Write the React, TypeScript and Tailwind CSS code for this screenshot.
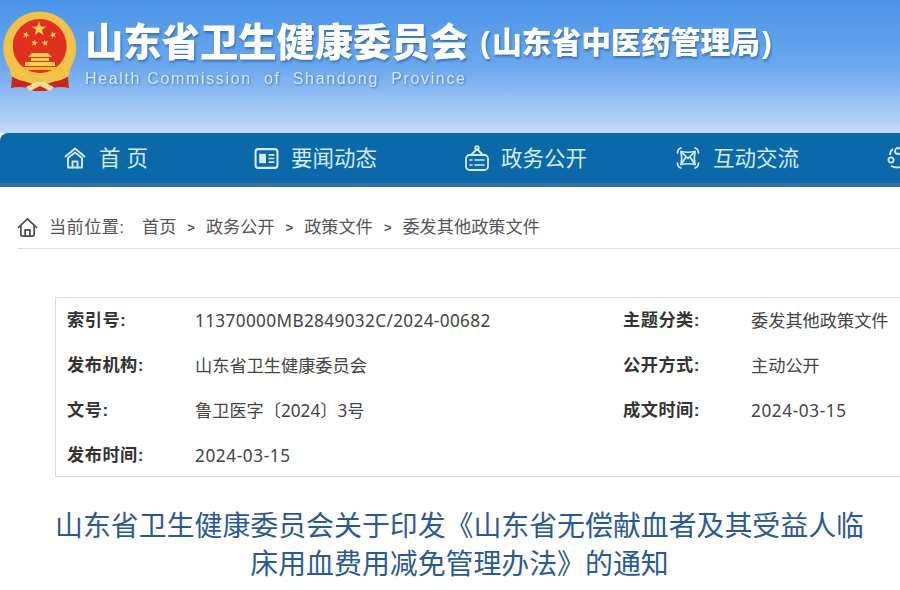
const cjk = "font-['Liberation_Sans','Noto_Sans_CJK_SC',sans-serif]";
const noto = "font-['Noto_Sans','Noto_Sans_CJK_SC',sans-serif]";

function Star({ x, y, r, a = 0 }: { x: number; y: number; r: number; a?: number }) {
  const pts = Array.from({ length: 10 }, (_, i) => {
    const rr = i % 2 ? r * 0.4 : r;
    const t = ((i * 36 + a - 90) * Math.PI) / 180;
    return `${(x + rr * Math.cos(t)).toFixed(2)},${(y + rr * Math.sin(t)).toFixed(2)}`;
  }).join(" ");
  return <polygon points={pts} fill="#f8d04e" />;
}

function Emblem() {
  return (
    <svg viewBox="0 0 80 86" className="w-[80px] h-[86px] shrink-0">
      <path d="M13 60 L11 80 Q24 77 34 83 L46 83 Q56 77 69 80 L67 60 Z" fill="#c9261f" />
      <circle cx="39.7" cy="40" r="36.5" fill="#f0c24a" />
      <circle cx="39.7" cy="38" r="27" fill="#e0301f" />
      <Star x={39} y={21} r={7.5} />
      <Star x={26} y={27} r={3.6} a={20} />
      <Star x={53} y={27} r={3.6} a={-20} />
      <Star x={34.5} y={35} r={3.6} a={10} />
      <Star x={45} y={35} r={3.6} a={-10} />
      <path d="M32 45 H48 L52 49 H28 Z M31 50 H49 V53 H31 Z M25 54 H55 V58 H25 Z" fill="#f8d04e" />
      <path d="M24 59 H56 V62 H24 Z" fill="#f3b92f" />
      <path d="M9 58 Q22 70 34 64 L40 68 L46 64 Q58 70 71 58 L69 68 Q56 76 48 72 L44 78 H36 L32 72 Q24 76 11 68 Z" fill="#f0c24a" />
      <path d="M26 79 L36 74 H44 L54 79 L50 83 L40 78 L30 83 Z" fill="#f6dd9a" />
    </svg>
  );
}

function HomeNavIcon() {
  return (
    <svg viewBox="0 0 22 22" className="w-[22px] h-[22px]" fill="none" stroke="#cfeaf5" strokeWidth="1.9" strokeLinejoin="round" strokeLinecap="round">
      <path d="M1.5 9.5 L11 1.5 L20.5 9.5" />
      <path d="M4 11 L11 5.5 L18 11 V20.5 H4 Z" />
      <path d="M8.5 20.5 V14.5 H13.5 V20.5" />
    </svg>
  );
}

function CrumbHomeIcon() {
  return (
    <svg viewBox="0 0 22 22" className="w-[21px] h-[21px] mr-[11px] shrink-0" fill="none" stroke="#4a4a4a" strokeWidth="1.8" strokeLinejoin="round" strokeLinecap="round">
      <path d="M1.5 11 L11 2 L20.5 11" />
      <path d="M4 9 V18 Q4 20 6 20 H16 Q18 20 18 18 V9" />
      <path d="M8.5 20 V13.5 H13.5 V20" />
    </svg>
  );
}

function NewsIcon() {
  return (
    <svg viewBox="0 0 24 22" className="w-[25px] h-[23px] -ml-[1px]" fill="none" stroke="#d3ecf5" strokeWidth="2">
      <rect x="1.5" y="2" width="21" height="18" rx="2.5" />
      <rect x="5" y="6.5" width="6.5" height="9" fill="#d3ecf5" stroke="none" />
      <path d="M14 7.5h5.5M14 11h5.5M14 14.5h5.5" strokeWidth="1.6" />
    </svg>
  );
}

function PublicIcon() {
  return (
    <svg viewBox="0 0 26 28" className="w-[26px] h-[28px]" fill="none" stroke="#d3ecf5" strokeWidth="1.8" strokeLinecap="round" strokeLinejoin="round">
      <rect x="2" y="11" width="22" height="15" rx="3.5" />
      <path d="M7 11 L13 5 L19 11" />
      <circle cx="13" cy="4" r="1.8" />
      <path d="M6 16h2M11 16h9M6 21h2M11 21h9" strokeWidth="1.6" />
    </svg>
  );
}

function InteractIcon() {
  return (
    <svg viewBox="0 0 24 24" className="w-[24px] h-[24px]" fill="none" stroke="#d3ecf5" strokeWidth="1.7" strokeLinecap="round" strokeLinejoin="round">
      <path d="M5 5.5 Q12 7 19 5.5 Q17.5 12 19 18.5 Q12 17 5 18.5 Q6.5 12 5 5.5 Z" />
      <path d="M5 5.5 L12 12.5 L19 5.5 M5 18.5 L10 11 M19 18.5 L14 11" />
      <path d="M1.5 7 Q1.5 3 5 2 M22.5 7 Q22.5 3 19 2 M1.5 17 Q1.5 21 5 22 M22.5 17 Q22.5 21 19 22" />
    </svg>
  );
}

function ServiceIcon() {
  return (
    <svg viewBox="0 0 24 24" className="w-[24px] h-[24px] shrink-0" fill="none" stroke="#d3ecf5" strokeWidth="1.8">
      <path d="M3 9 Q3 5 6 3" />
      <circle cx="11" cy="5" r="3" />
      <circle cx="4" cy="14" r="2.6" />
      <path d="M4 20 Q10 23 16 20" />
    </svg>
  );
}

function NavItem({ icon, label, className }: { icon: React.ReactNode; label: string; className: string }) {
  return (
    <div className={`flex items-center shrink-0 ${className}`}>
      {icon}
      <span className="text-[21.5px] leading-none pt-[3px] text-[#d3ecf5]">{label}</span>
    </div>
  );
}

function InfoRow({ label, value, label2, value2, valueClass = "", value2Class = "" }: {
  label: string;
  value: string;
  label2?: string;
  value2?: string;
  valueClass?: string;
  value2Class?: string;
}) {
  return (
    <div className="flex items-center h-[45px] text-[17.2px] pt-[1px]">
      <span className="w-[128px] shrink-0 font-bold tracking-[0.5px] text-[#333]">{label}</span>
      <span className={`w-[428px] shrink-0 text-[#444] whitespace-nowrap ${noto} ${valueClass}`}>{value}</span>
      {label2 && <span className="w-[128px] shrink-0 font-bold tracking-[0.5px] text-[#333]">{label2}</span>}
      {value2 && <span className={`shrink-0 text-[#444] whitespace-nowrap ${noto} ${value2Class}`}>{value2}</span>}
    </div>
  );
}

function Sep() {
  return <span className="w-[29.5px] text-center text-[13px] font-bold">&gt;</span>;
}

export default function App() {
  return (
    <div className={`w-[900px] h-[590px] overflow-hidden bg-white ${cjk}`}>
      {/* header */}
      <header className="h-[133px] bg-gradient-to-b from-[#4a94e8] via-[#6ba7ed] to-[#c2daf9] pt-[8px] flex items-start">
        <Emblem />
        <div className="ml-[5px] pt-[13px] min-w-0">
          <div className="flex items-center font-black text-white whitespace-nowrap drop-shadow-[1px_2px_1px_rgba(30,80,140,0.6)]">
            <span className="text-[38.3px] leading-[44px]">山东省卫生健康委员会</span>
            <span className="text-[29.8px] leading-[42px] ml-[12px]">(<span className="mx-[2px]">山东省中医药管理局</span>)</span>
          </div>
          <div className="text-[16px] leading-[20px] mt-[4px] tracking-[1.65px] text-[#d6e7f8] whitespace-pre drop-shadow-[1px_1px_1px_rgba(30,80,140,0.6)]">
            Health Commission  of  Shandong  Province
          </div>
        </div>
      </header>

      {/* nav */}
      <nav className="h-[54px] rounded-tl-[8px] bg-[#0b68a9] border-b-[4px] border-[#3a6d9f] flex items-center overflow-hidden">
        <NavItem className="ml-[64px] w-[191px] gap-[13px]" icon={<HomeNavIcon />} label="首 页" />
        <NavItem className="w-[209px] gap-[12px]" icon={<NewsIcon />} label="要闻动态" />
        <NavItem className="w-[212px] gap-[11px]" icon={<PublicIcon />} label="政务公开" />
        <NavItem className="w-[211px] gap-[13px]" icon={<InteractIcon />} label="互动交流" />
        <ServiceIcon />
      </nav>

      {/* breadcrumb */}
      <div className="ml-[17px] h-[62px] pt-[20px] border-b border-[#ddd] flex items-center text-[17.2px] text-[#555] whitespace-nowrap">
        <CrumbHomeIcon />
        <span className="mr-[18px] w-[75px] tracking-[0.4px]">当前位置:</span>
        <span>首页</span>
        <Sep />
        <span>政务公开</span>
        <Sep />
        <span>政策文件</span>
        <Sep />
        <span>委发其他政策文件</span>
      </div>

      {/* info box */}
      <div className="ml-[55px] mt-[48px] h-[180px] w-[900px] border border-[#d9d9d9] pl-[11px]">
        <InfoRow label="索引号:" value="11370000MB2849032C/2024-00682" valueClass="tracking-[0.35px]" label2="主题分类:" value2="委发其他政策文件" />
        <InfoRow label="发布机构:" value="山东省卫生健康委员会" label2="公开方式:" value2="主动公开" />
        <InfoRow label="文号:" value="鲁卫医字〔2024〕3号" label2="成文时间:" value2="2024-03-15" value2Class="tracking-[0.6px]" />
        <InfoRow label="发布时间:" value="2024-03-15" valueClass="tracking-[0.6px]" />
      </div>

      {/* title */}
      <h1 className="mt-[31px] ml-[52px] w-[815px] text-center text-[27.9px] leading-[38px] text-[#2a5a96]">
        山东省卫生健康委员会关于印发《山东省无偿献血者及其受益人临床用血费用减免管理办法》的通知
      </h1>
    </div>
  );
}
